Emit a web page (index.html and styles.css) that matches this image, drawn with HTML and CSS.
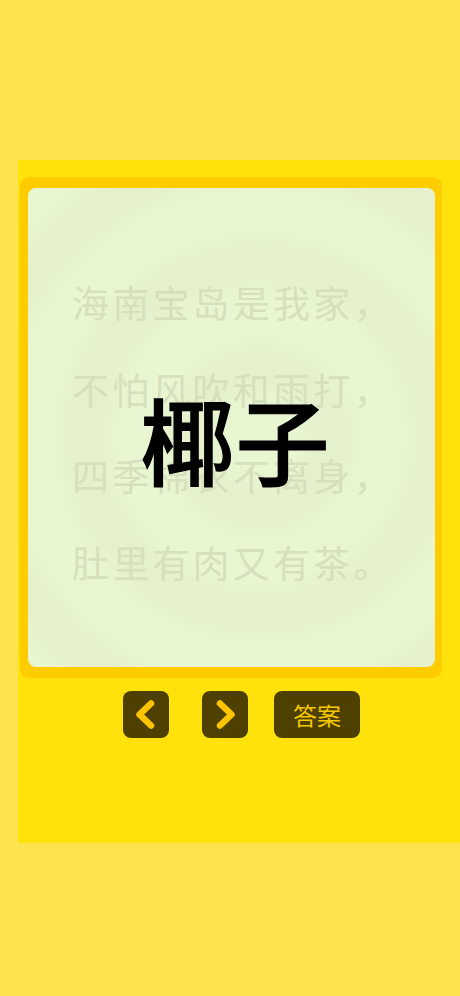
FILE: index.html
```html
<!DOCTYPE html>
<html lang="zh-CN">
<head>
<meta charset="utf-8">
<title>猜谜</title>
<link rel="stylesheet" href="styles.css">
</head>
<body>
<main class="panel">
  <section class="frame">
    <div class="card">
      <div class="poem">
        <p>海南宝岛是我家，</p>
        <p>不怕风吹和雨打，</p>
        <p>四季棉衣不离身，</p>
        <p>肚里有肉又有茶。</p>
      </div>
      <div class="answer">椰子</div>
    </div>
  </section>
  <nav class="controls">
    <button class="btn icon prev" aria-label="上一个">
      <svg viewBox="0 0 46 47" width="46" height="47"><polyline points="28,12.5 16.5,23.5 28,34.5" fill="none" stroke="#FFC400" stroke-width="6.5" stroke-linecap="round" stroke-linejoin="round"/></svg>
    </button>
    <button class="btn icon next" aria-label="下一个">
      <svg viewBox="0 0 46 47" width="46" height="47"><polyline points="18,12.5 29.5,23.5 18,34.5" fill="none" stroke="#FFC400" stroke-width="6.5" stroke-linecap="round" stroke-linejoin="round"/></svg>
    </button>
    <button class="btn text">答案</button>
  </nav>
</main>
</body>
</html>
```
FILE: styles.css
```css
html, body {
  margin: 0;
  padding: 0;
}
body {
  background: #FEE350;
  width: 460px;
  height: 996px;
  overflow: hidden;
  font-family: "Noto Sans CJK SC", "Noto Sans", sans-serif;
}
.panel {
  margin: 160px 0 0 18px;
  width: 442px;
  height: 683px;
  background: #FFE20B;
  padding-top: 17px;
  box-sizing: border-box;
}
.frame {
  margin-left: 2px;
  width: 422px;
  height: 501px;
  box-sizing: border-box;
  background: #FFCC00;
  border-radius: 9px;
  padding: 11px 7px 11px 8px;
}
.card {
  position: relative;
  height: 479px;
  border-radius: 8px;
  overflow: hidden;
  background:
    repeating-radial-gradient(circle at 232px 250px,
      #E9F6D2 0px, #E9F6D2 35px, #E5F1CD 60px, #E5F1CD 80px, #E9F6D2 105px);
  box-sizing: border-box;
  padding: 71px 0 0 44px;
}
.poem p {
  margin: 0;
  font-size: 37px;
  line-height: 86.5px;
  letter-spacing: 3.2px;
  color: #D7E0BD;
  white-space: nowrap;
}
.answer {
  position: absolute;
  left: 0;
  right: 0;
  top: 197px;
  text-align: center;
  padding-left: 8px;
  font-size: 94px;
  font-weight: 500;
  -webkit-text-stroke: 1.2px #000;
  line-height: 106px;
  color: #000;
  letter-spacing: 1px;
}
.controls {
  display: flex;
  align-items: center;
  padding-left: 105px;
  margin-top: 13px;
}
.btn {
  border: 0;
  padding: 0;
  margin: 0;
  background: #4D4000;
  border-radius: 8px;
  height: 47px;
  display: flex;
  align-items: center;
  justify-content: center;
  font-family: inherit;
}
.btn.icon {
  width: 46px;
}
.btn svg {
  display: block;
}
.btn.next {
  margin-left: 33px;
}
.btn.text {
  margin-left: 26px;
  width: 86px;
  font-size: 24px;
  color: #F5C800;
  line-height: 47px;
}
```
